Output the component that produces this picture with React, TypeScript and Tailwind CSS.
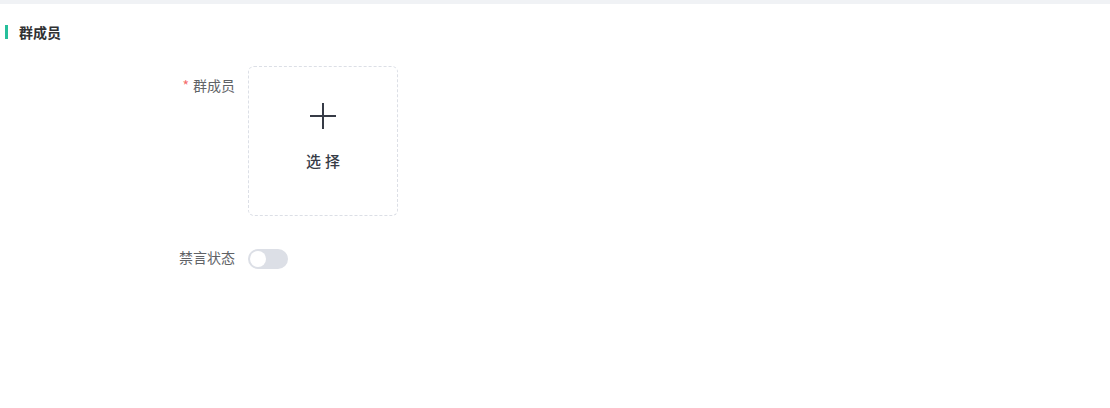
export default function App() {
  return (
    <div
      className="w-[1110px] h-[408px] bg-white"
      style={{ fontFamily: '"Noto Sans CJK SC", "Liberation Sans", sans-serif' }}
    >
      <div className="h-[4px] bg-[#f0f2f5]" />

      {/* Section title */}
      <div className="flex items-center h-[55px] pl-[5px]">
        <span className="w-[3px] h-[14px] bg-[#26bf9b] mr-[11px]" />
        <span className="text-[14px] font-bold text-[#303133] leading-none">群成员</span>
      </div>

      {/* Form */}
      <div className="flex flex-col">
        <div className="flex mt-[7px] mb-[22px]">
          <label className="w-[248px] pr-[13px] text-right text-[14px] leading-[38px] text-[#606266]">
            <span className="text-[#f56c6c] mr-[4px]">*</span>群成员
          </label>
          <div className="w-[150px] h-[150px] rounded-[6px] border border-dashed border-[#dcdfe6] flex flex-col items-center pt-[35px]">
            <svg width="28" height="28" viewBox="0 0 28 28">
              <path d="M14 1v26M1 14h26" stroke="#363b46" strokeWidth="2" fill="none" />
            </svg>
            <span className="mt-[23px] text-[15px] font-medium tracking-[4px] pl-[4px] text-[#363b46] leading-none">
              选择
            </span>
          </div>
        </div>

        <div className="flex items-center h-[40px]">
          <label className="w-[248px] pr-[13px] pb-[2px] text-right text-[14px] text-[#606266]">禁言状态</label>
          <button className="w-[40px] h-[20px] rounded-full bg-[#dcdfe6] relative mt-[2px]">
            <span className="absolute left-[2px] top-[2px] w-[16px] h-[16px] rounded-full bg-white" />
          </button>
        </div>
      </div>
    </div>
  )
}
